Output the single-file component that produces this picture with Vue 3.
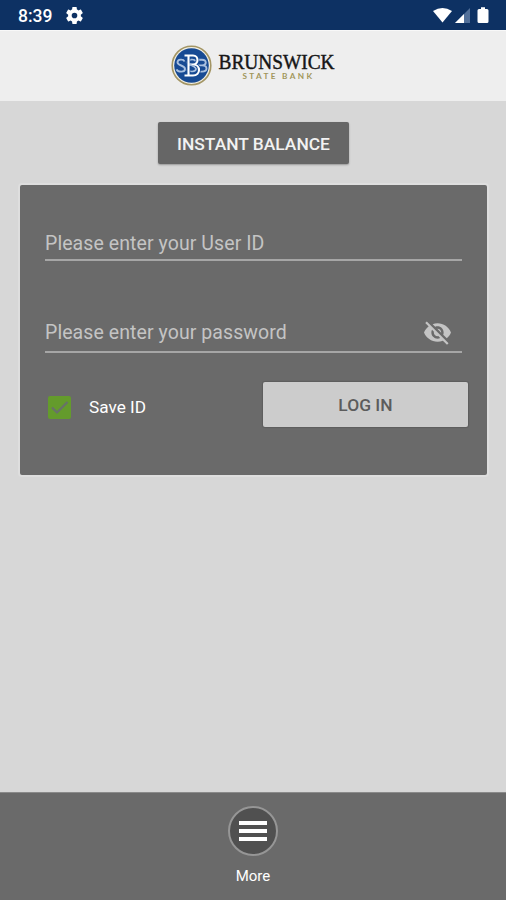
<script setup>
import { ref } from 'vue'

const userId = ref('')
const password = ref('')
const saveId = ref(true)
const showPassword = ref(false)
</script>

<template>
  <div class="screen">
    <div class="status">
      <span class="time">8:39</span>
      <svg class="gear" viewBox="2 2 20 20"><path fill="#fff" fill-rule="evenodd" d="M19.43 12.98c.04-.32.07-.64.07-.98s-.03-.66-.07-.98l2.11-1.65c.19-.15.24-.42.12-.64l-2-3.46c-.12-.22-.39-.3-.61-.22l-2.49 1c-.52-.4-1.08-.73-1.69-.98l-.38-2.65C14.46 2.18 14.25 2 14 2h-4c-.25 0-.46.18-.49.42l-.38 2.65c-.61.25-1.17.59-1.69.98l-2.49-1c-.23-.09-.49 0-.61.22l-2 3.46c-.13.22-.07.49.12.64l2.11 1.65c-.04.32-.07.65-.07.98s.03.66.07.98l-2.11 1.65c-.19.15-.24.42-.12.64l2 3.46c.12.22.39.3.61.22l2.49-1c.52.4 1.08.73 1.69.98l.38 2.65c.03.24.24.42.49.42h4c.25 0 .46-.18.49-.42l.38-2.65c.61-.25 1.17-.59 1.69-.98l2.49 1c.23.09.49 0 .61-.22l2-3.46c.12-.22.07-.49-.12-.64l-2.11-1.65zM12 15.3a3.3 3.3 0 1 1 0-6.6 3.3 3.3 0 0 1 0 6.6z"/></svg>
      <svg class="signals" width="60" height="18" viewBox="0 0 60 18">
        <path fill="#fff" d="M1 4Q10.500-2 20 4L10.500 15.500Z"/>
        <path fill="#52709a" d="M23 16L38 1V16Z"/>
        <path fill="#fff" d="M23 16L32 7V16Z"/>
        <path fill="#fff" d="M47 2H49V.3H53V2H55Q56.500 2 56.500 3.500V14.500Q56.500 16 55 16H47Q45.500 16 45.500 14.500V3.500Q45.500 2 47 2Z"/>
      </svg>
    </div>

    <header class="header">
      <svg width="180" height="42" viewBox="0 0 180 42">
        <circle cx="21.500" cy="20.500" r="19.300" fill="#f2efe3" stroke="#a39564" stroke-width="1.600"/>
        <circle cx="21.500" cy="20.500" r="17.300" fill="#174a93"/>
        <g fill="none" stroke-linejoin="round">
          <path stroke="#a9c0df" stroke-width="1.900" d="M14.500 16.500C13.500 13.800 7.500 14 7.500 17.300C7.500 21 15 20 15 24C15 27.500 8 27.500 6.500 24.300M28 14.700H32C37 14.700 37 20.400 32 20.400H28M32 20.400C38 20.400 38 26.600 32 26.600H28"/>
          <path stroke="#a9c0df" stroke-width="1.700" d="M26 16.500C24.500 13.500 17.500 14 17.500 17.400C17.500 21 26 20 26 23.800C26 27.300 19 27.300 17 24.500"/>
          <path stroke="#174a93" stroke-width="3.600" d="M15.500 10.500H23C29 10.500 29 19.500 23 19.500H18.500M23 19.500C31 19.500 31 30.500 23 30.500H15.500M18.500 10.500V30.500"/>
          <path stroke="#fff" stroke-width="2.100" d="M14.500 10.500H23C29 10.500 29 19.500 23 19.500H18.500M23 19.500C31 19.500 31 30.500 23 30.500H14.500M18.500 10.500V30.500"/>
          <path stroke="#a9c0df" stroke-width="1.400" d="M19.500 18.500C20 20.700 25 20.700 25.500 23.500"/>
        </g>
        <text class="brand" x="48.500" y="24" textLength="116" lengthAdjust="spacingAndGlyphs">BRUNSWICK</text>
        <text class="tag" x="72.500" y="34" textLength="69.500">STATE BANK</text>
      </svg>
    </header>

    <main class="content">
      <button class="instant">INSTANT BALANCE</button>
      <form class="card" @submit.prevent>
        <div class="field user">
          <input v-model="userId" type="text" placeholder="Please enter your User ID" />
        </div>
        <div class="field pass">
          <input v-model="password" :type="showPassword ? 'text' : 'password'" placeholder="Please enter your password" />
          <svg class="eye" viewBox="1 2 22 20" @click="showPassword = !showPassword"><path fill="#c4c4c4" d="M12 7c2.760 0 5 2.240 5 5 0 .65-.13 1.260-.36 1.830l2.920 2.920c1.510-1.260 2.700-2.890 3.430-4.750-1.730-4.390-6-7.500-11-7.500-1.400 0-2.740.25-3.980.7l2.160 2.160C10.740 7.130 11.350 7 12 7zM2 4.270l2.280 2.280.46.46C3.080 8.300 1.780 10.020 1 12c1.730 4.390 6 7.500 11 7.500 1.550 0 3.030-.3 4.380-.84l.42.42L19.730 22 21 20.730 3.270 3 2 4.270zM7.530 9.800l1.550 1.550c-.05.21-.08.43-.08.65 0 1.660 1.340 3 3 3 .22 0 .44-.03.65-.08l1.550 1.550c-.67.33-1.410.53-2.200.53-2.760 0-5-2.240-5-5 0-.79.2-1.530.53-2.200zm4.310-.78l3.150 3.150.02-.16c0-1.660-1.340-3-3-3l-.17.01z"/></svg>
        </div>
        <div class="actions">
          <label class="save" @click="saveId = !saveId">
            <span class="box">
              <svg v-if="saveId" width="23" height="23" viewBox="0 0 23 23"><path d="M4 11.500L9 16.500L19.500 6" fill="none" stroke="#68716a" stroke-width="2.200"/></svg>
            </span>
            <span>Save ID</span>
          </label>
          <button class="login">LOG IN</button>
        </div>
      </form>
    </main>

    <footer class="footer">
      <div class="menu"><i></i><i></i><i></i></div>
      <span>More</span>
    </footer>
  </div>
</template>

<style>
body { margin: 0; }
</style>

<style scoped>
.screen {
  width: 506px;
  height: 900px;
  display: flex;
  flex-direction: column;
  background: #d7d7d7;
  font-family: Roboto, sans-serif;
  overflow: hidden;
}
.status {
  height: 30px;
  box-sizing: border-box;
  display: flex;
  align-items: center;
  padding: 1px 14px 0 18px;
  background: #0d3163;
  color: #fff;
}
.time { font-size: 17.500px; font-weight: 500; width: 48px; line-height: 28px; padding-top: 1px; }
.gear { width: 17px; height: 17px; }
.signals { margin-left: auto; }
.header {
  height: 71px;
  box-sizing: border-box;
  padding: 14px 0 0 170px;
  background: #eee;
  border-top: 1px solid #f8f8f8;
}
.header svg { display: block; }
.brand { font-family: "Liberation Serif", serif; font-size: 21px; fill: #161616; stroke: #161616; stroke-width: .45px; }
.tag { font-family: Lato, sans-serif; font-size: 8.200px; font-weight: 700; fill: #a1965b; }
.content {
  flex: 1;
  display: flex;
  flex-direction: column;
  align-items: center;
  padding: 21px 19px 0 20px;
}
button { border: 0; padding: 0; font-family: inherit; font-weight: 500; }
.instant {
  width: 191px;
  height: 42px;
  padding-top: 2px;
  background: #666;
  color: #f2f2f2;
  font-size: 17.400px;
  border-radius: 2px;
  box-shadow: 0 1px 2px rgba(0, 0, 0, .3);
}
.card {
  width: 467px;
  height: 290px;
  box-sizing: border-box;
  margin-top: 21px;
  padding: 40px 19px 0 25px;
  background: #6a6a6a;
  border-radius: 2px;
  box-shadow: 0 0 0 2px #dedede;
}
.field {
  width: 417px;
  box-sizing: border-box;
  display: flex;
  align-items: center;
  padding-top: 3px;
  border-bottom: 2px solid #a6a6a6;
}
.user { height: 36px; }
.pass { height: 42px; margin-top: 50px; padding-right: 11px; }
input {
  flex: 1;
  min-width: 0;
  border: 0;
  padding: 0;
  outline: 0;
  background: transparent;
  color: #fff;
  font: 19.500px Roboto, sans-serif;
  letter-spacing: .08px;
}
input::placeholder { color: #c4c4c4; opacity: 1; }
.eye { width: 27px; height: 25px; }
.actions {
  display: flex;
  justify-content: space-between;
  margin-top: 29px;
  padding-left: 3px;
}
.save { display: flex; align-items: center; gap: 18px; height: 50px; color: #fff; font-size: 17.200px; }
.box { width: 23px; height: 23px; border-radius: 2px; background: #649b2c; }
.box svg { display: block; }
.login {
  width: 205px;
  height: 45px;
  padding-top: 1px;
  background: #ccc;
  color: #5c5c5c;
  font-size: 17.400px;
  border-radius: 2px;
  box-shadow: 0 0 1px 1px rgba(0, 0, 0, .12);
}
.footer {
  height: 108px;
  box-sizing: border-box;
  padding-top: 13px;
  display: flex;
  flex-direction: column;
  align-items: center;
  background: #6a6a6a;
  border-top: 1px solid #8a8a8a;
  color: #fff;
  font-size: 15px;
}
.menu {
  width: 50px;
  height: 50px;
  box-sizing: border-box;
  display: flex;
  flex-direction: column;
  align-items: center;
  justify-content: center;
  gap: 4px;
  border: 2px solid #969696;
  border-radius: 50%;
  background: #505050;
}
.menu i { width: 28px; height: 4px; background: #fff; }
.footer span { margin-top: 11px; line-height: 18px; }
</style>
